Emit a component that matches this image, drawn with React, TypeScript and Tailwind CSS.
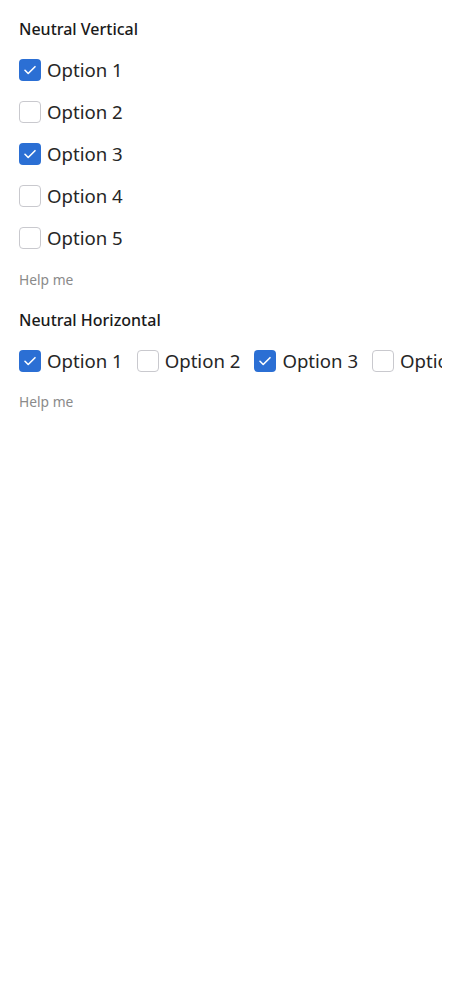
import React from "react";

const font = { fontFamily: '"Noto Sans", "Open Sans", sans-serif' };

function Box({ checked }: { checked: boolean }) {
  return checked ? (
    <span className="flex h-[22px] w-[22px] shrink-0 items-center justify-center rounded-[4px] bg-[#2b6fd4]">
      <svg width="22" height="22" viewBox="0 0 22 22" fill="none">
        <path d="M6 11.3l3.2 3.2L16 7.7" stroke="white" strokeWidth="1.6" strokeLinecap="round" strokeLinejoin="round" />
      </svg>
    </span>
  ) : (
    <span className="h-[22px] w-[22px] shrink-0 rounded-[4px] border border-[#c9c9ce] bg-white" />
  );
}

function Item({ label, checked }: { label: string; checked: boolean }) {
  return (
    <label className="flex h-[42px] shrink-0 items-center gap-[6px]">
      <Box checked={checked} />
      <span className="whitespace-nowrap text-[18.6px] font-normal leading-[24px] text-[#262626]">{label}</span>
    </label>
  );
}

const opts = [
  { label: "Option 1", checked: true },
  { label: "Option 2", checked: false },
  { label: "Option 3", checked: true },
  { label: "Option 4", checked: false },
  { label: "Option 5", checked: false },
];

export default function App() {
  return (
    <div className="min-h-[1000px] bg-white px-[19px] pt-[18px]" style={font}>
      <div className="flex flex-col">
        <div className="mb-[9px] h-[22px] text-[16px] font-medium leading-[22px] text-[#1a1a1a]">Neutral Vertical</div>
        <div className="flex flex-col">
          {opts.map((o) => (
            <Item key={o.label} {...o} />
          ))}
        </div>
        <div className="mt-[12px] h-[18px] text-[13.8px] leading-[18px] text-[#8a8a8a]">Help me</div>
      </div>
      <div className="mt-[20px] flex flex-col">
        <div className="mb-[9px] h-[22px] text-[16px] font-medium leading-[22px] text-[#1a1a1a]">Neutral Horizontal</div>
        <div className="flex gap-[14px] overflow-hidden">
          {opts.map((o) => (
            <Item key={o.label} {...o} />
          ))}
        </div>
        <div className="mt-[11px] h-[18px] text-[13.8px] leading-[18px] text-[#8a8a8a]">Help me</div>
      </div>
    </div>
  );
}
